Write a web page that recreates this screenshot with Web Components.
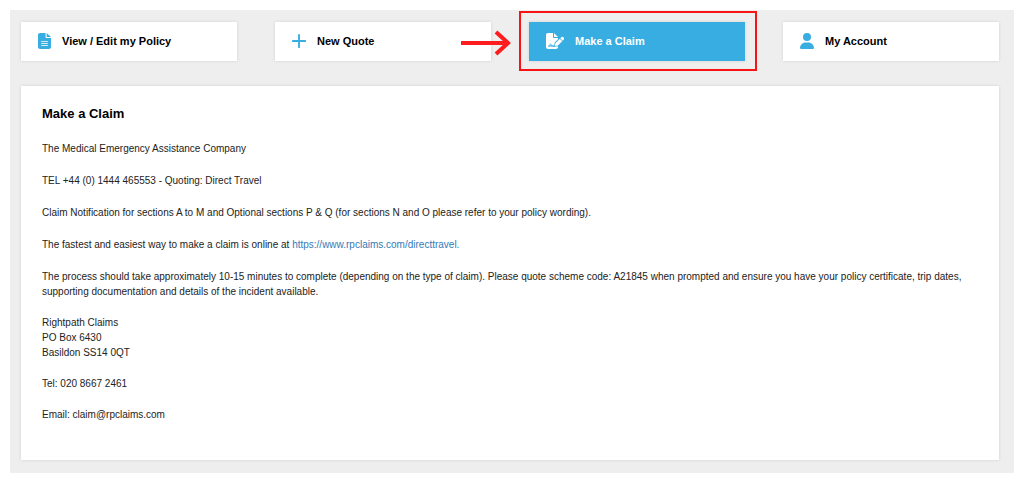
<!DOCTYPE html>
<html lang="en">
<head>
<meta charset="utf-8">
<meta name="viewport" content="width=device-width, initial-scale=1">
<title>Make a Claim</title>
<style>
  body {
    margin: 10px;
    background: #fff;
    color: #222;
    font: 10px/15px "Liberation Sans", Arial, sans-serif;
  }
  p {
    margin: 0;
  }
  a {
    color: #337ab7;
    text-decoration: none;
  }
</style>
</head>
<body>

<account-page>
  <nav-tile slot="nav" icon="file" href="#policy">View / Edit my Policy</nav-tile>
  <nav-tile slot="nav" icon="plus" href="#quote">New Quote</nav-tile>
  <nav-tile slot="nav" icon="sign" href="#claim" active>Make a Claim</nav-tile>
  <nav-tile slot="nav" icon="user" href="#account">My Account</nav-tile>

  <content-panel>
    <span slot="title">Make a Claim</span>
    <p>The Medical Emergency Assistance Company</p>
    <p>TEL +44 (0) 1444 465553 - Quoting: Direct Travel</p>
    <p>Claim Notification for sections A to M and Optional sections P &amp; Q (for sections N and O please refer to your policy wording).</p>
    <p>The fastest and easiest way to make a claim is online at <a href="https://www.rpclaims.com/directtravel">https://www.rpclaims.com/directtravel.</a></p>
    <p>The process should take approximately 10-15 minutes to complete (depending on the type of claim). Please quote scheme code: A21845 when prompted and ensure you have your policy certificate, trip dates, supporting documentation and details of the incident available.</p>
    <p slot="contact">Rightpath Claims<br>PO Box 6430<br>Basildon SS14 0QT</p>
    <p slot="contact">Tel: 020 8667 2461</p>
    <p slot="contact">Email: claim@rpclaims.com</p>
  </content-panel>
</account-page>

<script>
// Page shell: row of tiles, then the content
class AccountPage extends HTMLElement {
  constructor() {
    super();
    const shadow = this.attachShadow({ mode: 'open' });
    shadow.innerHTML = `
      <style>
        :host {
          display: block;
          background: #eee;
          padding: 12px 15px 13px 11px;
        }
        nav {
          display: grid;
          grid-template-columns: repeat(4, 1fr);
          gap: 38px;
          margin-bottom: 25px;
        }
      </style>
      <nav aria-label="Account"><slot name="nav"></slot></nav>
      <main><slot></slot></main>
    `;
  }
}
customElements.define('account-page', AccountPage);

// Icons for the tiles
const icons = {
  file: `
    <svg width="13" height="16" viewBox="0 0 384 512" preserveAspectRatio="none" aria-hidden="true">
      <path fill="currentColor" d="M64 0C28.7 0 0 28.7 0 64V448c0 35.3 28.7 64 64 64H320c35.3 0 64-28.7 64-64V160H256c-17.7 0-32-14.3-32-32V0H64zM256 0V128H384L256 0z"/>
      <path fill="none" stroke="#d3edf9" stroke-width="36" stroke-linecap="round" d="M108 272H276M108 336H276M108 400H276"/>
    </svg>`,
  plus: `
    <svg width="14" height="16" viewBox="0 0 448 512" aria-hidden="true">
      <path fill="none" stroke="currentColor" stroke-width="60" stroke-linecap="round" d="M224 60V452M28 256H420"/>
    </svg>`,
  sign: `
    <svg width="18" height="16" viewBox="0 0 576 512" aria-hidden="true">
      <path fill="currentColor" d="M64 0C28.7 0 0 28.7 0 64V448c0 35.3 28.7 64 64 64H320c35.3 0 64-28.7 64-64V428H80V396H260L276 318C280 304 286 294 294 286L384 196V160H256c-17.7 0-32-14.3-32-32V0H64zM256 0V128H384L256 0z"/>
      <path fill="none" stroke="#37ade2" stroke-width="26" stroke-linecap="round" stroke-linejoin="round" d="M80 428C108 424 118 402 134 356C144 336 158 350 164 376L176 420C188 400 204 402 214 424H300"/>
      <path fill="currentColor" stroke="currentColor" stroke-width="12" d="M549.8 139.7c-15.6-15.6-40.9-15.6-56.6 0l-29.4 29.4 71 71 29.4-29.4c15.6-15.6 15.6-40.9 0-56.600l-14.4-14.4zM311.9 321c-4.1 4.1-7 9.2-8.4 14.9l-15 60.1c-1.4 5.5.2 11.2 4.2 15.2s9.7 5.600 15.2 4.2l60.1-15c5.600-1.4 10.8-4.3 14.9-8.4L512.1 262.7l-71-71L311.9 321z"/>
    </svg>`,
  user: `
    <svg width="14" height="16" viewBox="0 0 448 512" aria-hidden="true">
      <path fill="currentColor" d="M224 256A128 128 0 1 0 224 0a128 128 0 1 0 0 256zm-45.7 48C79.8 304 0 383.8 0 482.3C0 498.7 13.3 512 29.7 512H418.3c16.4 0 29.7-13.3 29.7-29.7C448 383.8 368.2 304 269.7 304H178.3z"/>
    </svg>`
};

// Navigation tile, the active one gets the marker frame and arrow
class NavTile extends HTMLElement {
  constructor() {
    super();
    const shadow = this.attachShadow({ mode: 'open' });
    const active = this.hasAttribute('active');
    const href = this.getAttribute('href') || '#';
    const icon = icons[this.getAttribute('icon')] || '';

    shadow.innerHTML = `
      <style>
        :host {
          display: block;
          position: relative;
        }
        a {
          display: flex;
          align-items: center;
          gap: 11px;
          padding: 11px 17px 12px;
          background: #fff;
          box-shadow: 0 0 3px rgba(0, 0, 0, 0.12);
          color: #000;
          font-size: 11px;
          line-height: 16px;
          font-weight: bold;
          text-decoration: none;
        }
        svg {
          display: block;
          flex: none;
          color: #37ade2;
        }
        :host([active]) a {
          background: #37ade2;
          color: #fff;
        }
        :host([active]) a svg {
          color: #fff;
        }
        .frame {
          position: absolute;
          inset: -11px -12px -10px -10px;
          border: 2px solid #f81414;
          pointer-events: none;
        }
        svg.arrow {
          position: absolute;
          right: calc(100% + 18px);
          top: 8px;
          color: #ff1c1c;
          pointer-events: none;
        }
      </style>
      <a href="${href}"${active ? ' aria-current="page"' : ''}>${icon}<span><slot></slot></span></a>
      ${active ? `
        <div class="frame"></div>
        <svg class="arrow" width="50" height="26" viewBox="0 0 50 26" aria-hidden="true">
          <path fill="none" stroke="currentColor" stroke-width="4" d="M0 13H46M35 2L47 13L35 24"/>
        </svg>` : ''}
    `;
  }
}
customElements.define('nav-tile', NavTile);

// White panel with a heading, the text and the contact details
class ContentPanel extends HTMLElement {
  constructor() {
    super();
    const shadow = this.attachShadow({ mode: 'open' });
    shadow.innerHTML = `
      <style>
        :host {
          display: block;
          background: #fff;
          box-shadow: 0 0 3px rgba(0, 0, 0, 0.12);
          padding: 19px 21px 38px;
        }
        h1 {
          margin: 0 0 18px;
          color: #000;
          font-size: 13px;
          line-height: 18px;
        }
        .text {
          display: grid;
          gap: 17px;
        }
        address {
          display: grid;
          gap: 16px;
          margin-top: 16px;
          font-style: normal;
        }
      </style>
      <h1><slot name="title"></slot></h1>
      <div class="text"><slot></slot></div>
      <address><slot name="contact"></slot></address>
    `;
  }
}
customElements.define('content-panel', ContentPanel);
</script>
</body>
</html>
